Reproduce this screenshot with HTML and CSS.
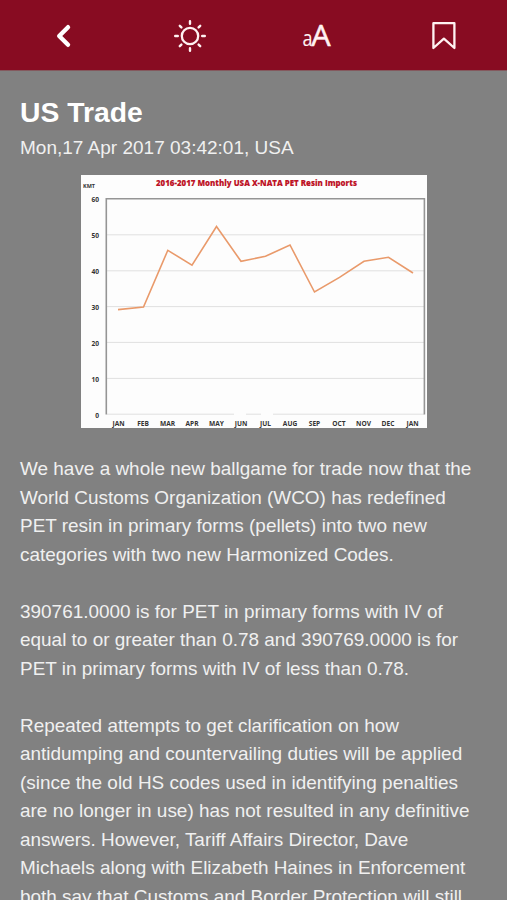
FILE: index.html
```
<!DOCTYPE html>
<html lang="en">
<head>
    <meta charset="UTF-8">
    <meta name="viewport" content="width=device-width, initial-scale=1.0">
    <title>US Trade</title>
    <link rel="stylesheet" href="styles.css">
</head>
<body>
    <!-- Toolbar -->
    <header class="toolbar">
        <a class="tool" aria-label="Back">
            <svg width="36" height="36" viewBox="0 0 36 36">
                <path class="back" d="M23 9.2 L14.2 18 L23 26.8" />
            </svg>
        </a>
        <a class="tool" aria-label="Brightness">
            <svg width="36" height="36" viewBox="0 0 36 36">
                <circle class="line" cx="18" cy="18" r="8.2" />
                <path class="rays" d="M18 3.2v2.6M18 30.2v2.6M3.2 18h2.6M30.2 18h2.6M7.8 7.8l1.6 1.6M26.6 26.6l1.6 1.6M7.8 28.2l1.6-1.6M26.6 9.4l1.6-1.6" />
            </svg>
        </a>
        <a class="tool" aria-label="Text size">
            <svg width="36" height="36" viewBox="0 0 36 36">
                <text class="small-a" x="3.6" y="28.3" textLength="10" lengthAdjust="spacingAndGlyphs">a</text>
                <text class="big-a" x="12.3" y="28.3" textLength="19.4" lengthAdjust="spacingAndGlyphs">A</text>
            </svg>
        </a>
        <a class="tool" aria-label="Bookmark">
            <svg width="36" height="36" viewBox="0 0 36 36">
                <path class="line" d="M7.4 5.2h21v24.8l-10.5-9.4-10.5 9.4z" />
            </svg>
        </a>
    </header>

    <main class="article">
        <h1 class="title">US Trade</h1>
        <div class="date">Mon,17 Apr 2017 03:42:01, USA</div>

        <!-- Chart -->
        <svg class="chart" width="346" height="253" viewBox="0 0 346 253">
            <text class="chart-title" x="75" y="10.5" textLength="201" lengthAdjust="spacingAndGlyphs">2016-2017 Monthly USA X-NATA PET Resin Imports</text>
            <text class="unit" x="2" y="13.2" textLength="12" lengthAdjust="spacingAndGlyphs">KMT</text>
            <path class="grid" d="M26 59.8h317M26 95.8h317M26 131.6h317M26 167.4h317M26 203.4h317M26 239.2h127M165 239.2h15M192 239.2h151" />
            <path class="frame" d="M25.3 239.5V23.8H343.4V239.5" />
            <polyline class="series" points="37,134.6 62.5,132 86.8,75.3 111,90.2 135.5,51.5 160,86.3 184.5,81.3 209,70 233.5,117 258.5,102.4 283,86.3 307.5,82.3 332,98" />
            <g class="y-labels">
                <text x="18" y="27">60</text>
                <text x="18" y="63">50</text>
                <text x="18" y="99">40</text>
                <text x="18" y="135">30</text>
                <text x="18" y="171">20</text>
                <text x="18" y="207">10</text>
                <text x="18" y="242.5">0</text>
            </g>
            <g class="x-labels">
                <text x="37.5" y="251">JAN</text>
                <text x="62" y="251">FEB</text>
                <text x="86.5" y="251">MAR</text>
                <text x="111" y="251">APR</text>
                <text x="135.5" y="251">MAY</text>
                <text x="160" y="251">JUN</text>
                <text x="184.5" y="251">JUL</text>
                <text x="209" y="251">AUG</text>
                <text x="233.5" y="251">SEP</text>
                <text x="258" y="251">OCT</text>
                <text x="282.5" y="251">NOV</text>
                <text x="307" y="251">DEC</text>
                <text x="331.5" y="251">JAN</text>
            </g>
        </svg>

        <p>We have a whole new ballgame for trade now that the<br>
            World Customs Organization (WCO) has redefined<br>
            PET resin in primary forms (pellets) into two new<br>
            categories with two new Harmonized Codes.</p>
        <p>390761.0000 is for PET in primary forms with IV of<br>
            equal to or greater than 0.78 and 390769.0000 is for<br>
            PET in primary forms with IV of less than 0.78.</p>
        <p>Repeated attempts to get clarification on how<br>
            antidumping and countervailing duties will be applied<br>
            (since the old HS codes used in identifying penalties<br>
            are no longer in use) has not resulted in any definitive<br>
            answers. However, Tariff Affairs Director, Dave<br>
            Michaels along with Elizabeth Haines in Enforcement<br>
            both say that Customs and Border Protection will still</p>
    </main>
</body>
</html>
```
FILE: styles.css
```
body {
    margin: 0;
    height: 900px;
    overflow: hidden;
    display: flex;
    flex-direction: column;
    background: #818181;
    color: #f0f0f0;
    font-family: "Liberation Sans", Arial, sans-serif;
}

.toolbar {
    flex: none;
    display: flex;
    height: 70px;
    background: #880c22;
    border-bottom: 1px solid #84595e;
    box-sizing: content-box;
}

.tool {
    flex: 1;
    display: flex;
    align-items: center;
    justify-content: center;
    padding-top: 2px;
}

.tool svg {
    overflow: visible;
    fill: none;
    stroke: #fff2f2;
    stroke-linecap: round;
    stroke-linejoin: round;
}

.back {
    stroke: #fff;
    stroke-width: 4.4;
}

.line {
    stroke-width: 2.3;
}

.rays {
    stroke-width: 2.4;
}

.tool .small-a,
.tool .big-a {
    fill: #fff2f2;
    stroke: #fff2f2;
    font-family: "Open Sans", sans-serif;
}

.small-a {
    font-size: 22px;
    stroke-width: 0.1;
}

.big-a {
    font-size: 30px;
    stroke-width: 0.6;
}

.article {
    flex: 1;
    padding: 24px 20px 0;
}

.title {
    margin: 0;
    font-size: 28.3px;
    line-height: 34px;
    color: #fff;
}

.date {
    padding-top: 1px;
    font-size: 19px;
    line-height: 36px;
}

.chart {
    display: block;
    margin: 9px 0 27px 61px;
    background: #fdfdfd;
}

.chart text {
    font-family: "Open Sans", sans-serif;
    font-weight: bold;
    font-size: 6.6px;
    fill: #333;
}

.chart .chart-title {
    font-size: 9px;
    font-weight: 800;
    fill: #bd1226;
    stroke: #bd1226;
    stroke-width: 0.1;
}

.chart .unit {
    font-size: 5.2px;
}

.y-labels {
    text-anchor: end;
}

.x-labels {
    text-anchor: middle;
}

.grid {
    stroke: #e0e0e0;
    stroke-width: 1;
}

.frame {
    fill: none;
    stroke: #959595;
    stroke-width: 1.6;
}

.series {
    fill: none;
    stroke: #e99a6b;
    stroke-width: 1.6;
}

.article p {
    margin: 0 0 28.5px;
    font-size: 18.96px;
    line-height: 28.5px;
    white-space: nowrap;
}
```
